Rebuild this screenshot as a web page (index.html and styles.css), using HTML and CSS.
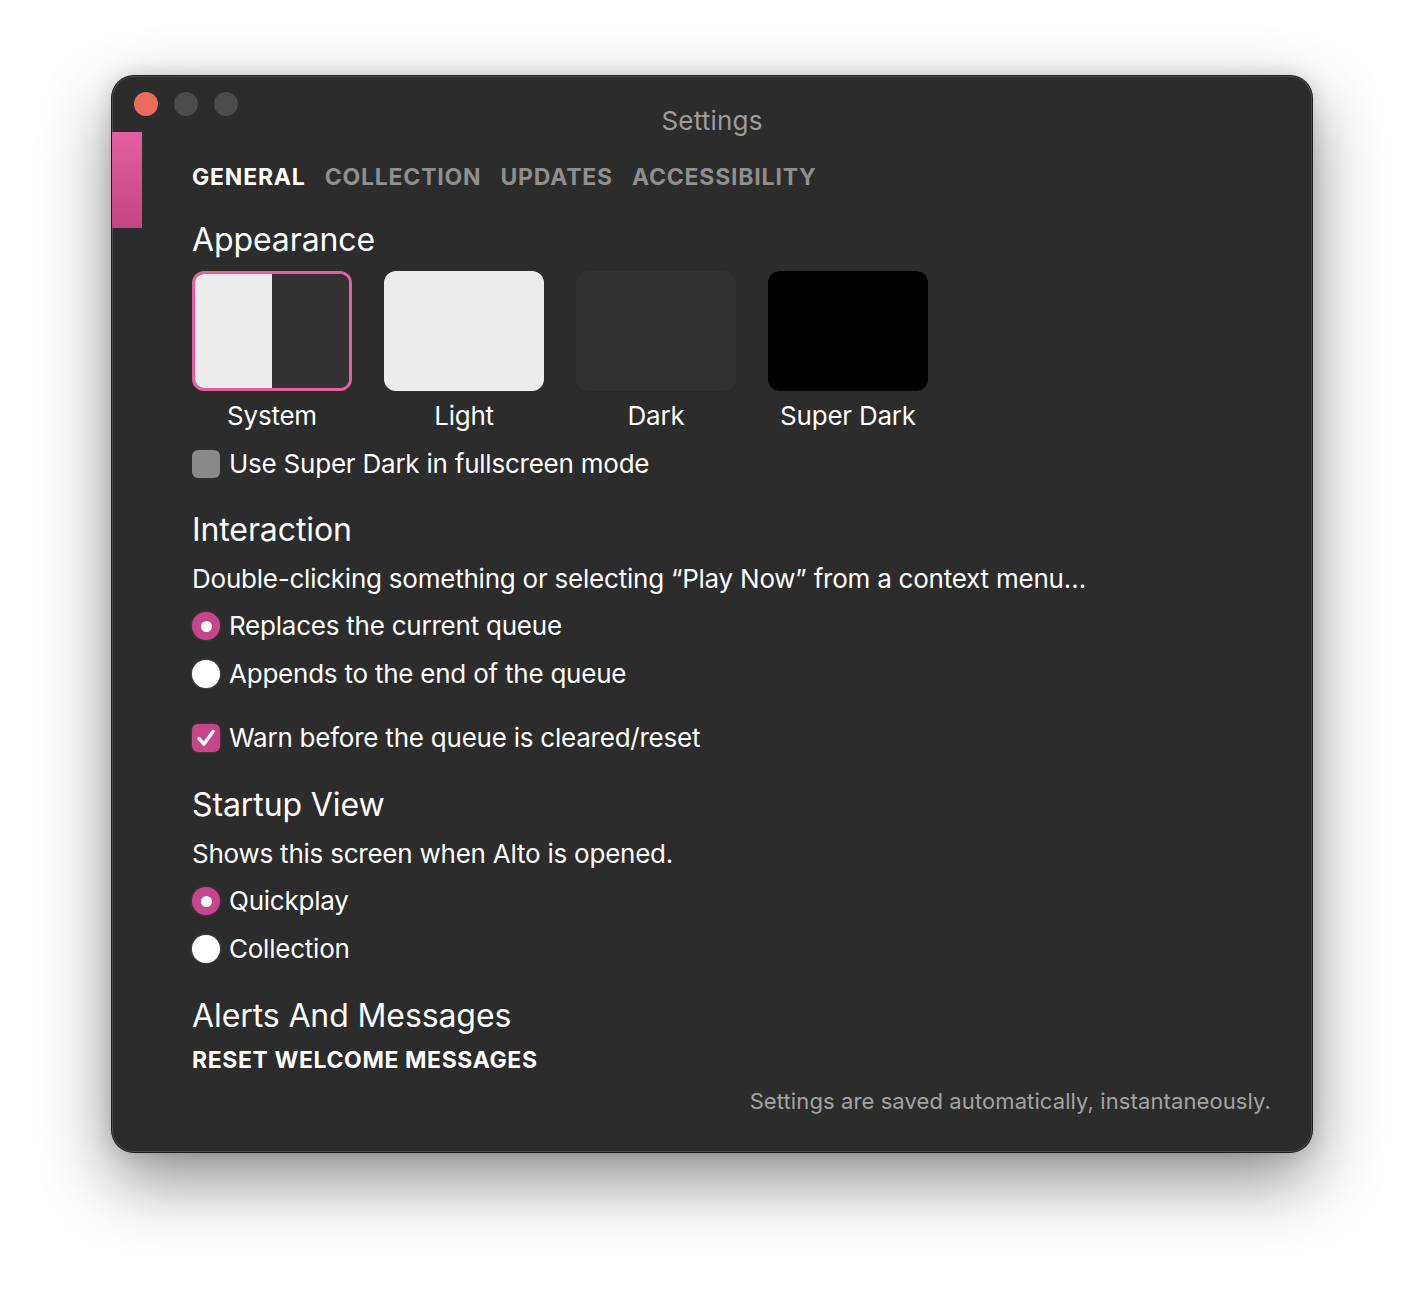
FILE: index.html
```html
<!DOCTYPE html>
<html>
<head>
<meta charset="utf-8">
<link rel="stylesheet" href="styles.css">
</head>
<body>
<div class="window">
  <div class="titlebar">
    <div class="lights">
      <span class="light red"></span>
      <span class="light"></span>
      <span class="light"></span>
    </div>
    <div class="title">Settings</div>
    <div></div>
  </div>
  <div class="main">
    <div class="sidebar-mark"></div>
    <div class="content">
      <nav class="tabs">
        <span class="tab active">GENERAL</span>
        <span class="tab">COLLECTION</span>
        <span class="tab">UPDATES</span>
        <span class="tab">ACCESSIBILITY</span>
      </nav>

      <h2 class="heading h-appearance">Appearance</h2>
      <div class="themes">
        <div class="theme">
          <div class="swatch system selected"><span class="half l"></span><span class="half d"></span></div>
          <div class="theme-label">System</div>
        </div>
        <div class="theme">
          <div class="swatch light-sw"></div>
          <div class="theme-label">Light</div>
        </div>
        <div class="theme">
          <div class="swatch dark-sw"></div>
          <div class="theme-label">Dark</div>
        </div>
        <div class="theme">
          <div class="swatch super-sw"></div>
          <div class="theme-label">Super Dark</div>
        </div>
      </div>
      <div class="row row-superdark"><span class="checkbox off"></span>Use Super Dark in fullscreen mode</div>

      <h2 class="heading h-interaction">Interaction</h2>
      <p class="desc">Double-clicking something or selecting “Play Now” from a context menu…</p>
      <div class="row row-first"><span class="radio on"></span>Replaces the current queue</div>
      <div class="row row-next"><span class="radio"></span>Appends to the end of the queue</div>
      <div class="row row-warn"><span class="checkbox on"><svg viewBox="0 0 28 28" width="28" height="28"><path d="M7 14.5 L12 20 L21 7.5" fill="none" stroke="#fff" stroke-width="3.4" stroke-linecap="round" stroke-linejoin="round"/></svg></span>Warn before the queue is cleared/reset</div>

      <h2 class="heading h-section">Startup View</h2>
      <p class="desc">Shows this screen when Alto is opened.</p>
      <div class="row row-first"><span class="radio on"></span>Quickplay</div>
      <div class="row row-next"><span class="radio"></span>Collection</div>

      <h2 class="heading h-section">Alerts And Messages</h2>
      <div class="reset">RESET WELCOME MESSAGES</div>
      <div class="footer">Settings are saved automatically, instantaneously.</div>
    </div>
  </div>
</div>
</body>
</html>
```

FILE: styles.css
```css
* { box-sizing: border-box; }
html, body { margin: 0; padding: 0; background: #ffffff; }
body {
  font-family: Inter, "Noto Sans", "Liberation Sans", sans-serif;
  padding: 76px 0 0 112px;
  min-height: 1300px;
}
.window {
  width: 1200px;
  height: 1076px;
  background: #2c2c2c;
  border-radius: 22px;
  box-shadow: 0 0 0 1px #4e4e4e inset, 0 0 0 1px #1c1c1c, 0 28px 70px rgba(0,0,0,0.45), 0 0 20px rgba(0,0,0,0.15);
  color: #ffffff;
  overflow: hidden;
}
.titlebar {
  display: grid;
  grid-template-columns: 1fr auto 1fr;
  height: 56px;
}
.lights {
  display: flex;
  gap: 16px;
  padding: 16px 0 0 22px;
}
.light {
  width: 24px;
  height: 24px;
  border-radius: 50%;
  background: #4b4b4b;
}
.light.red { background: #ec6b5e; }
.title {
  margin-top: 29px;
  font-size: 26px;
  line-height: 32px;
  height: 32px;
  color: #9c9c9c;
  letter-spacing: 0.2px;
}
.main {
  display: flex;
}
.sidebar-mark {
  width: 30px;
  height: 96px;
  flex: none;
  background: linear-gradient(180deg, #e35fa2 0%, #c44683 100%);
}
.content {
  flex: 1;
  padding: 30px 41px 0 50px;
}
.tabs {
  display: flex;
  gap: 19px;
  font-size: 23px;
  line-height: 30px;
  font-weight: 700;
  letter-spacing: 0.8px;
}
.tab { color: #8f8f8f; }
.tab.active { color: #ffffff; }
.heading {
  margin: 0;
  font-size: 32px;
  line-height: 40px;
  font-weight: 400;
  letter-spacing: -0.1px;
}
.h-appearance { margin-top: 28px; }
.h-interaction { margin-top: 30px; }
.h-section { margin-top: 31px; }
.themes {
  display: flex;
  gap: 32px;
  margin-top: 11px;
}
.theme {
  width: 160px;
  display: flex;
  flex-direction: column;
  align-items: center;
}
.swatch {
  width: 160px;
  height: 120px;
  border-radius: 12px;
  overflow: hidden;
}
.swatch.system {
  display: flex;
  border: 3px solid #e35f9f;
}
.half { flex: 1; }
.half.l { background: #ececec; }
.half.d { background: #323232; }
.light-sw { background: #ececec; }
.dark-sw { background: #313131; }
.super-sw { background: #000000; }
.theme-label {
  margin-top: 9px;
  font-size: 26px;
  line-height: 32px;
  letter-spacing: -0.23px;
}
.row {
  display: flex;
  align-items: center;
  gap: 9px;
  font-size: 26px;
  line-height: 32px;
  height: 32px;
  letter-spacing: -0.23px;
}
.row-superdark { margin-top: 16px; }
.row-first { margin-top: 15px; }
.row-next { margin-top: 16px; }
.row-warn { margin-top: 32px; }
.checkbox {
  width: 28px;
  height: 28px;
  border-radius: 6px;
  flex: none;
  display: flex;
}
.checkbox.off { background: #8a8a8a; }
.checkbox.on { background: #c5478a; box-shadow: 0 0 3px rgba(197,71,138,0.5); }
.radio {
  width: 28px;
  height: 28px;
  border-radius: 50%;
  background: #ffffff;
  flex: none;
  box-shadow: 0 0 2px rgba(255,255,255,0.4);
  display: flex;
  align-items: center;
  justify-content: center;
}
.radio.on {
  background: #c5478a;
  box-shadow: 0 0 3px rgba(197,71,138,0.5);
}
.radio.on::after {
  content: "";
  width: 11px;
  height: 11px;
  border-radius: 50%;
  background: #ffffff;
}
.desc {
  margin: 13px 0 0;
  font-size: 26px;
  line-height: 32px;
  letter-spacing: -0.23px;
}
.reset {
  margin-top: 9px;
  font-size: 23px;
  line-height: 30px;
  font-weight: 700;
  letter-spacing: 0.6px;
}
.footer {
  margin-top: 12px;
  text-align: right;
  font-size: 22px;
  line-height: 28px;
  color: #a3a3a3;
  letter-spacing: 0.1px;
}
```
